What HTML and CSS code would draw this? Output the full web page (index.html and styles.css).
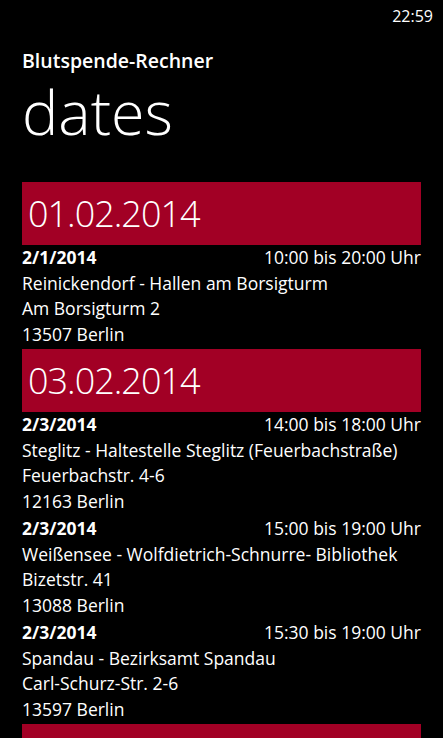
FILE: index.html
```html
<!DOCTYPE html>
<html lang="de">
<head>
  <meta charset="UTF-8" />
  <title>Blutspende-Rechner</title>
  <link rel="stylesheet" href="styles.css">
</head>
<body>

  <div class="statusBar">22:59</div>

  <div class="header">
    <p class="appTitle">Blutspende-Rechner</p>
    <h1 class="pageTitle">dates</h1>
  </div>

  <div class="dateList">
    <div class="dayHeader">01.02.2014</div>
    <div class="entry">
      <div class="entryTop"><b>2/1/2014</b><span>10:00 bis 20:00 Uhr</span></div>
      <div>Reinickendorf - Hallen am Borsigturm</div>
      <div>Am Borsigturm 2</div>
      <div>13507 Berlin</div>
    </div>

    <div class="dayHeader">03.02.2014</div>
    <div class="entry">
      <div class="entryTop"><b>2/3/2014</b><span>14:00 bis 18:00 Uhr</span></div>
      <div>Steglitz - Haltestelle Steglitz (Feuerbachstraße)</div>
      <div>Feuerbachstr. 4-6</div>
      <div>12163 Berlin</div>
    </div>
    <div class="entry">
      <div class="entryTop"><b>2/3/2014</b><span>15:00 bis 19:00 Uhr</span></div>
      <div>Weißensee - Wolfdietrich-Schnurre- Bibliothek</div>
      <div>Bizetstr. 41</div>
      <div>13088 Berlin</div>
    </div>
    <div class="entry">
      <div class="entryTop"><b>2/3/2014</b><span>15:30 bis 19:00 Uhr</span></div>
      <div>Spandau - Bezirksamt Spandau</div>
      <div>Carl-Schurz-Str. 2-6</div>
      <div>13597 Berlin</div>
    </div>

    <div class="dayHeader"></div>
  </div>

</body>
</html>
```

FILE: styles.css
```css
body {
  margin: 0;
  background-color: #000;
  color: #fff;
  font-family: 'Open Sans', 'Noto Sans', sans-serif;
  overflow: hidden;
  height: 738px;
}
.statusBar {
  height: 32px;
  padding: 5px 10px 0 0;
  box-sizing: border-box;
  text-align: right;
  font-size: 16px;
}
.header {
  padding: 0 22px;
}
.appTitle {
  margin: 16px 0 0 0;
  font-size: 19.5px;
  font-weight: 600;
  line-height: 26px;
}
.pageTitle {
  margin: 0;
  font-size: 61px;
  font-weight: 300;
  line-height: 76px;
}
.dateList {
  margin: 32px 22px 0 22px;
}
.dayHeader {
  background-color: #a20025;
  height: 63px;
  padding-left: 6px;
  font-size: 36px;
  font-weight: 300;
  line-height: 63px;
  letter-spacing: -1px;
}
.entry {
  height: 104px;
  font-size: 17.5px;
  line-height: 25.5px;
}
.entryTop {
  display: flex;
  justify-content: space-between;
}
.entryTop b {
  font-weight: 700;
}
```
